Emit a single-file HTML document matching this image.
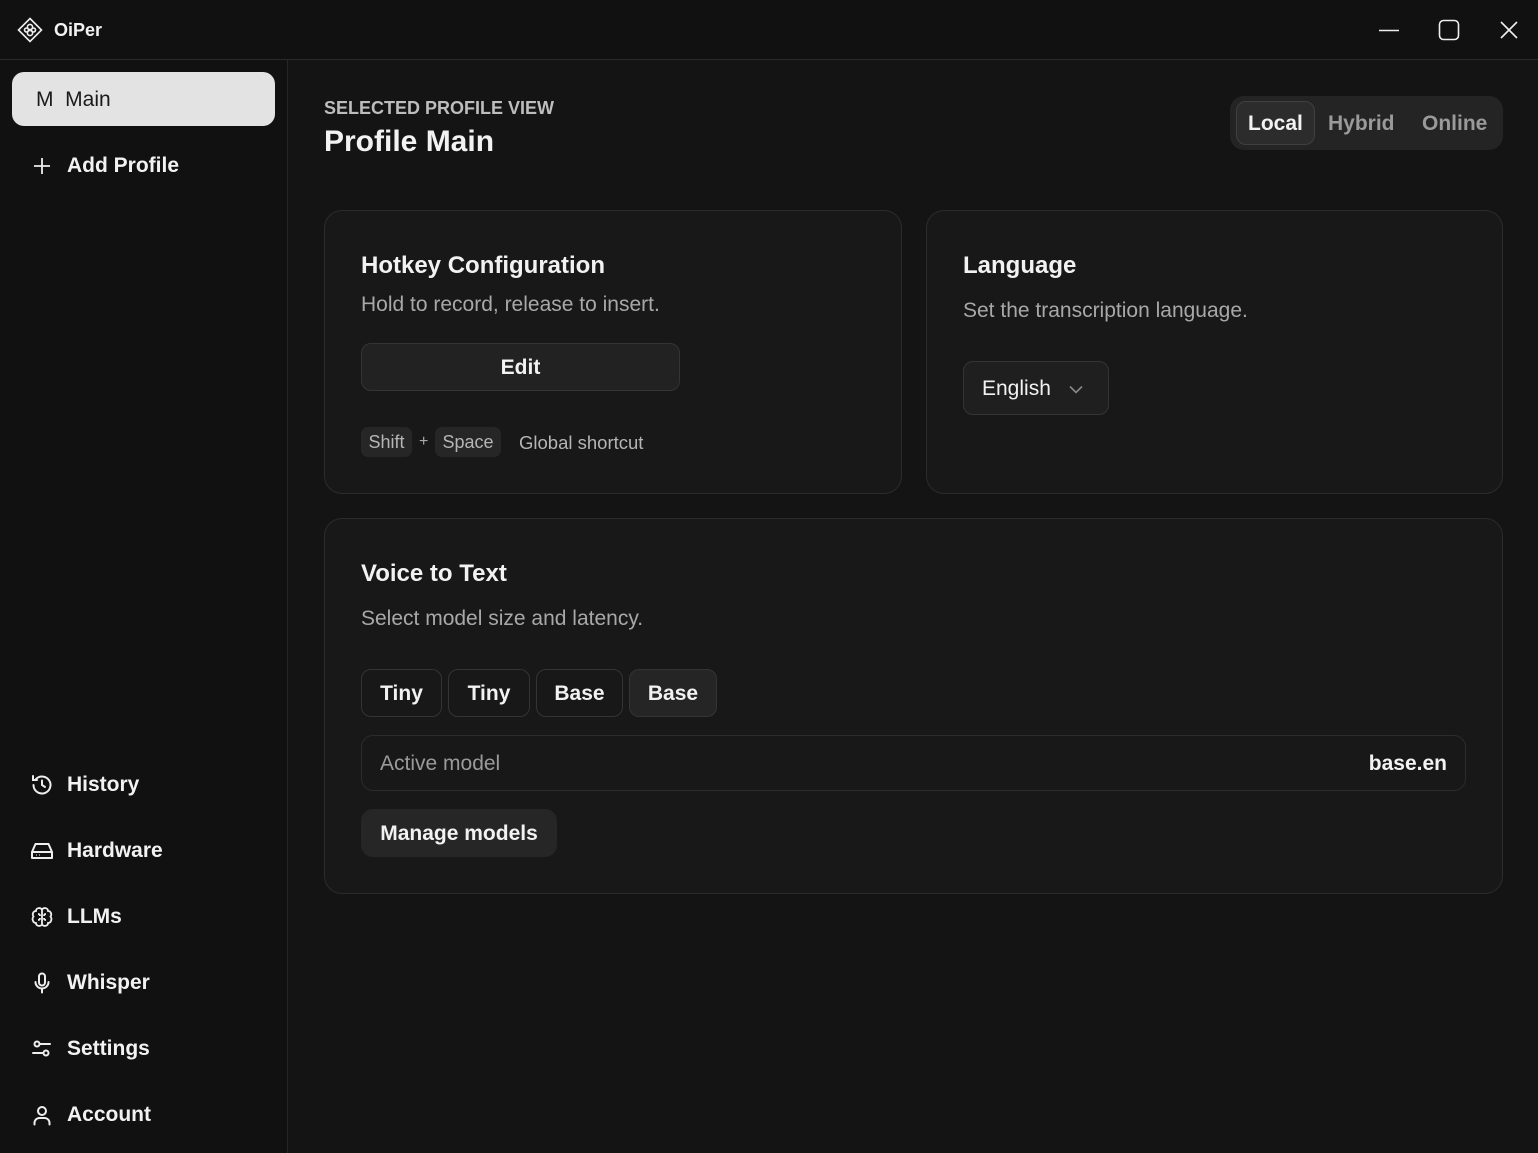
<!DOCTYPE html>
<html><head><meta charset="utf-8"><style>
*{box-sizing:border-box;margin:0;padding:0}
body{width:1538px;height:1153px;background:#111;font-family:"Liberation Sans",sans-serif;color:#f2f2f2;position:relative;overflow:hidden}
.title{position:absolute;left:0;top:0;width:1538px;height:60px;border-bottom:1px solid #2a2a2a;background:#111}
.side{position:absolute;left:0;top:60px;width:288px;height:1093px;border-right:1px solid #262626;background:#111}
.main{position:absolute;left:288px;top:60px;right:0;bottom:0;background:#141414}
.abs{position:absolute}
.nav{position:absolute;left:30px;font-size:21px;font-weight:600;display:flex;align-items:center;gap:13px}
.nav svg{width:24px;height:24px}
.card{position:absolute;background:#181818;border:1px solid #2c2c2c;border-radius:18px}
.h{font-size:24px;font-weight:600;position:absolute}
.sub{font-size:21px;color:#a8a8a8;position:absolute}
.btn{position:absolute;border:1px solid #343434;border-radius:10px;font-size:21px;font-weight:600;display:flex;align-items:center;justify-content:center;padding-top:2px}
</style></head><body>
<div class="title">
 <svg class="abs" style="left:17px;top:17px" width="26" height="26" viewBox="0 0 26 26" fill="none" stroke="#eee" stroke-width="1.6"><path d="M13 1.5 L24.5 13 L13 24.5 L1.5 13Z"/><circle cx="13" cy="10" r="2.6"/><circle cx="13" cy="16" r="2.6"/><circle cx="9.5" cy="13" r="2"/><circle cx="16.5" cy="13" r="2"/></svg>
 <div class="abs" style="left:54px;top:20px;font-size:18px;font-weight:600">OiPer</div>
 <svg class="abs" style="left:1378px;top:20px" width="22" height="20"><path d="M1 10.5H21" stroke="#eee" stroke-width="1.6"/></svg>
 <svg class="abs" style="left:1438px;top:19px" width="22" height="22"><rect x="1.5" y="1.5" width="19" height="19" rx="4" fill="none" stroke="#eee" stroke-width="1.6"/></svg>
 <svg class="abs" style="left:1499px;top:20px" width="20" height="20"><path d="M2 2L18 18M18 2L2 18" stroke="#eee" stroke-width="1.6"/></svg>
</div>
<div class="side">
 <div class="abs" style="left:12px;top:12px;width:263px;height:54px;background:#e3e3e3;border-radius:12px;color:#1a1a1a;font-size:21px;display:flex;align-items:center;padding-left:24px;padding-top:2px">M&nbsp;&nbsp;Main</div>
 <div class="nav" style="top:94px"><svg viewBox="0 0 24 24" fill="none" stroke="#eee" stroke-width="1.8"><path d="M12 4V20M4 12H20"/></svg>Add Profile</div>
 <div class="nav" style="top:713px"><svg viewBox="0 0 24 24" fill="none" stroke="#eee" stroke-width="2" stroke-linecap="round"><path d="M3.5 12A8.5 8.5 0 1 0 6 6"/><path d="M3 3v4h4"/><path d="M12 7.5V12l3 2"/></svg>History</div>
 <div class="nav" style="top:779px"><svg viewBox="0 0 24 24" fill="none" stroke="#eee" stroke-width="2" stroke-linejoin="round"><path d="M2 13L5.5 5H18.5L22 13V19H2Z"/><path d="M2 13H22"/><path d="M6 16h.5M9 16h.5"/></svg>Hardware</div>
 <div class="nav" style="top:845px"><svg viewBox="0 0 24 24" fill="none" stroke="#eee" stroke-width="1.8"><path d="M12 4.5C10 2 6 3 6 6 3 6 2 9.5 3.5 11.5 1.5 14 3 18 6 18c0 3 4 4 6 1.5 2 2.5 6 1.5 6-1.5 3 0 4.5-4 2.5-6.5C22 9.5 21 6 18 6c0-3-4-4-6-1.5Z"/><path d="M12 4.5V19.5M8 9c1.5 0 2 1 2 2M16 9c-1.5 0-2 1-2 2M8 15c1.5 0 2-1 2-2M16 15c-1.5 0-2-1-2-2"/></svg>LLMs</div>
 <div class="nav" style="top:911px"><svg viewBox="0 0 24 24" fill="none" stroke="#eee" stroke-width="2" stroke-linecap="round"><rect x="9" y="2.5" width="6" height="12" rx="3"/><path d="M5.5 11a6.5 6.5 0 0 0 13 0M12 17.5V21.5"/></svg>Whisper</div>
 <div class="nav" style="top:977px"><svg viewBox="0 0 24 24" fill="none" stroke="#eee" stroke-width="2" stroke-linecap="round"><circle cx="7" cy="7" r="2.5"/><circle cx="16" cy="16" r="2.5"/><path d="M9.5 7H20M3 16H13.5"/></svg>Settings</div>
 <div class="nav" style="top:1043px"><svg viewBox="0 0 24 24" fill="none" stroke="#eee" stroke-width="2" stroke-linecap="round"><circle cx="12" cy="8" r="4"/><path d="M4.5 21.5v-1.5a5 5 0 0 1 5-5h5a5 5 0 0 1 5 5v1.5"/></svg>Account</div>
</div>
<div class="main"></div>
<div class="abs" style="left:324px;top:98px;font-size:18px;font-weight:600;color:#bdbdbd">SELECTED PROFILE VIEW</div>
<div class="abs" style="left:324px;top:125px;font-size:30px;font-weight:600">Profile Main</div>
<div class="abs" style="left:1230px;top:96px;width:273px;height:54px;background:#242424;border-radius:14px"></div>
<div class="abs" style="left:1236px;top:101px;width:79px;height:44px;background:#2c2c2c;border:1px solid #404040;border-radius:10px"></div>
<div class="abs" style="left:1248px;top:112px;font-size:21px;font-weight:600">Local</div>
<div class="abs" style="left:1328px;top:112px;font-size:21px;font-weight:600;color:#9a9a9a">Hybrid</div>
<div class="abs" style="left:1422px;top:112px;font-size:21px;font-weight:600;color:#9a9a9a">Online</div>

<div class="card" style="left:324px;top:210px;width:578px;height:284px">
 <div class="h" style="left:36px;top:41px">Hotkey Configuration</div>
 <div class="sub" style="left:36px;top:82px">Hold to record, release to insert.</div>
 <div class="btn" style="left:36px;top:132px;width:319px;height:48px;background:#222">Edit</div>
 <div class="abs" style="left:36px;top:216px;height:30px;width:51px;background:#262626;border-radius:7px;font-size:18px;color:#b5b5b5;display:flex;align-items:center;justify-content:center">Shift</div>
 <div class="abs" style="left:94px;top:222px;font-size:16px;color:#aaa">+</div>
 <div class="abs" style="left:110px;top:216px;height:30px;width:66px;background:#262626;border-radius:7px;font-size:18px;color:#b5b5b5;display:flex;align-items:center;justify-content:center">Space</div>
 <div class="abs" style="left:194px;top:221px;font-size:18.5px;color:#b5b5b5">Global shortcut</div>
</div>
<div class="card" style="left:926px;top:210px;width:577px;height:284px">
 <div class="h" style="left:36px;top:41px">Language</div>
 <div class="sub" style="left:36px;top:88px">Set the transcription language.</div>
 <div class="btn" style="left:36px;top:150px;width:146px;height:54px;background:#1f1f1f;justify-content:flex-start;padding-left:18px;font-weight:500">English<svg style="margin-left:18px" width="14" height="9"><path d="M1 1.5L7 7.5L13 1.5" fill="none" stroke="#888" stroke-width="1.6"/></svg></div>
</div>
<div class="card" style="left:324px;top:518px;width:1179px;height:376px">
 <div class="h" style="left:36px;top:41px">Voice to Text</div>
 <div class="sub" style="left:36px;top:88px">Select model size and latency.</div>
 <div class="btn" style="left:36px;top:150px;width:81px;height:48px">Tiny</div>
 <div class="btn" style="left:123px;top:150px;width:82px;height:48px">Tiny</div>
 <div class="btn" style="left:211px;top:150px;width:87px;height:48px">Base</div>
 <div class="btn" style="left:304px;top:150px;width:88px;height:48px;background:#252525">Base</div>
 <div class="abs" style="left:36px;top:216px;width:1105px;height:56px;border:1px solid #2c2c2c;border-radius:12px"></div>
 <div class="abs" style="left:55px;top:233px;font-size:21px;color:#9a9a9a">Active model</div>
 <div class="abs" style="right:55px;top:233px;font-size:21px;font-weight:600">base.en</div>
 <div class="abs" style="left:36px;top:290px;width:196px;height:48px;background:#262626;border-radius:12px;font-size:21px;font-weight:600;display:flex;align-items:center;justify-content:center;padding-top:2px">Manage models</div>
</div>
</body></html>
